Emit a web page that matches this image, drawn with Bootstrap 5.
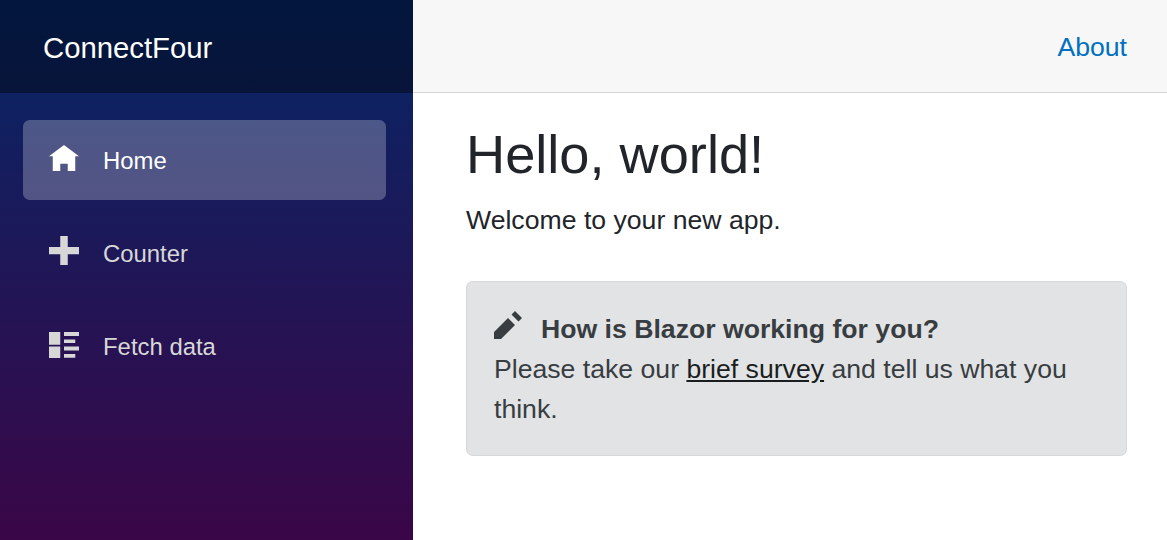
<!DOCTYPE html>
<html lang="en">
  <head>
    <meta charset="UTF-8" />
    <meta name="viewport" content="width=device-width, initial-scale=1.0" />
    <title>ConnectFour</title>
    <link
      href="https://cdn.jsdelivr.net/npm/bootstrap@5.3.0/dist/css/bootstrap.min.css"
      rel="stylesheet"
    />
    <style>
      body {
        font-family: "Liberation Sans", Arial, sans-serif;
        font-size: 26.64px;
        line-height: 40px;
        color: #212529;
      }
      .app-shell {
        min-height: 540px;
      }
      .side-panel {
        width: 413px;
        background-image: linear-gradient(180deg, #052767 0%, #3a0647 100%);
      }
      .brand-row {
        height: 93px;
        padding: 2px 0 0 43px;
        background-color: rgba(0, 0, 0, 0.4);
      }
      .brand-row .navbar-brand {
        font-size: 29.3px;
        color: #fff;
        padding: 0;
        margin: 0;
      }
      .side-nav {
        padding: 27px 27px 0 23px;
        gap: 13px;
      }
      .side-nav .nav-link {
        height: 80px;
        padding: 2px 26px 0;
        font-size: 23.9px;
        color: #d7d7d7;
        border-radius: 6.6px;
      }
      .side-nav .nav-link.active {
        color: #fff;
        background-color: rgba(255, 255, 255, 0.25);
      }
      .nav-glyph {
        width: 30px;
        margin-right: 24px;
        margin-top: -6px;
        fill: currentColor;
      }
      .nav-glyph.glyph-plus {
        height: 29px;
        margin-top: -7px;
      }
      .nav-glyph.glyph-list {
        margin-top: -4px;
      }
      .top-strip {
        height: 93px;
        padding: 2px 40px 0 0;
        background-color: #f7f7f7;
        border-bottom: 1px solid #d6d5d5;
      }
      .top-strip a {
        color: #0071c1;
        text-decoration: none;
      }
      .page-body {
        padding: 29px 40px 0 53px;
      }
      .page-body h1 {
        font-size: 54.2px;
        font-weight: 400;
        line-height: 65px;
        margin-bottom: 13px;
      }
      .page-body p {
        margin-bottom: 0;
      }
      .survey-box {
        margin-top: 41px;
        padding: 26.5px 27px;
        color: #383d41;
        background-color: #e2e3e5;
        border-color: #d6d8db;
        border-radius: 6.6px;
      }
      .survey-box a {
        color: #1b1e21;
      }
      .pencil-glyph {
        width: 28px;
        height: 28px;
        margin-right: 19px;
        vertical-align: -1px;
        fill: currentColor;
      }
    </style>
  </head>
  <body>
    <div class="app-shell d-flex">
      <div class="side-panel flex-shrink-0">
        <div class="brand-row navbar d-flex align-items-center">
          <a class="navbar-brand" href="#">ConnectFour</a>
        </div>
        <ul class="side-nav nav flex-column">
          <li class="nav-item">
            <a class="nav-link active d-flex align-items-center" href="#">
              <svg class="nav-glyph" viewBox="0 0 8 7"><path d="M4 0l-4 3h1v4h2v-2h2v2h2v-4.03l1 .03-4-3z" /></svg>
              Home
            </a>
          </li>
          <li class="nav-item">
            <a class="nav-link d-flex align-items-center" href="#">
              <svg class="nav-glyph glyph-plus" viewBox="0 0 8 8" preserveAspectRatio="none"><path d="M3 0v3h-3v2h3v3h2v-3h3v-2h-3v-3h-2z" /></svg>
              Counter
            </a>
          </li>
          <li class="nav-item">
            <a class="nav-link d-flex align-items-center" href="#">
              <svg class="nav-glyph glyph-list" viewBox="0 0 8 7"><path d="M0 0v3.4h3v-3.4h-3zm4 0v1.05h4v-1.05h-4zm0 2v.95h3v-.95h-3zm-4 1.85v3.15h3v-3.15h-3zm4 0v1.05h4v-1.05h-4zm0 2v1h3v-1h-3z" /></svg>
              Fetch data
            </a>
          </li>
        </ul>
      </div>
      <div class="flex-grow-1">
        <div class="top-strip d-flex align-items-center justify-content-end">
          <a href="#">About</a>
        </div>
        <div class="page-body">
          <h1>Hello, world!</h1>
          <p>Welcome to your new app.</p>
          <div class="survey-box alert mb-0">
            <svg class="pencil-glyph" viewBox="0 0 8 8"><path d="M6 0l-1 1 2 2 1-1-2-2zm-2 2l-4 4v2h2l4-4-2-2z" /></svg><strong>How is Blazor working for you?</strong><br />
            Please take our <a href="#">brief survey</a> and tell us what you think.
          </div>
        </div>
      </div>
    </div>
    <script src="https://cdn.jsdelivr.net/npm/bootstrap@5.3.0/dist/js/bootstrap.bundle.min.js"></script>
  </body>
</html>
